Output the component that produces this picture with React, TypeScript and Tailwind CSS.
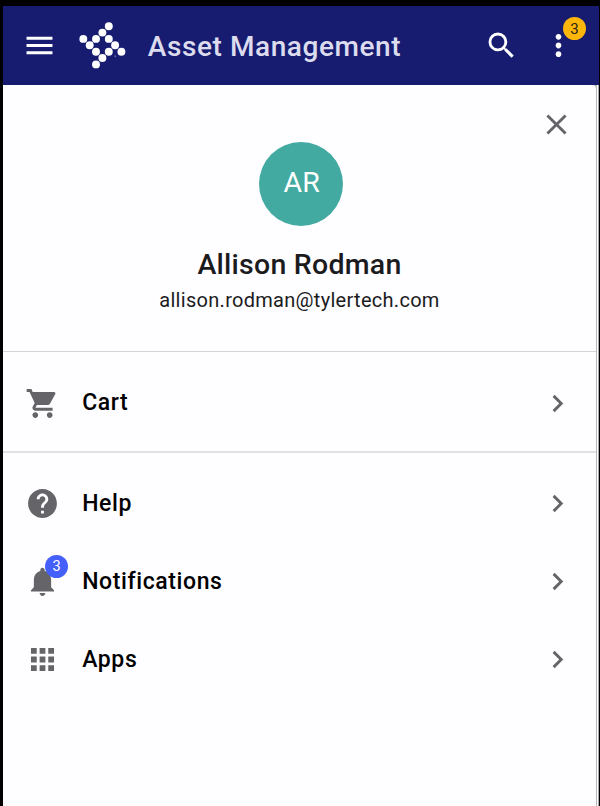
import React from "react";

type IconProps = { d: string; className?: string };

function Icon({ d, className = "" }: IconProps) {
  return (
    <svg viewBox="-0.15 -0.15 24.3 24.3" className={`h-[35px] w-[35px] shrink-0 fill-current ${className}`} aria-hidden="true">
      <path d={d} />
    </svg>
  );
}

const icons = {
  menu: "M3 18h18v-2H3v2zm0-5h18v-2H3v2zm0-7v2h18V6H3z",
  search:
    "M15.5 14h-.79l-.28-.27A6.471 6.471 0 0 0 16 9.5 6.5 6.5 0 1 0 9.5 16c1.61 0 3.09-.59 4.23-1.57l.27.28v.79l5 4.99L20.49 19l-4.99-5zm-6 0C7.01 14 5 11.99 5 9.5S7.01 5 9.5 5 14 7.01 14 9.5 11.99 14 9.5 14z",
  more: "M12 8c1.1 0 2-.9 2-2s-.9-2-2-2-2 .9-2 2 .9 2 2 2zm0 2c-1.1 0-2 .9-2 2s.9 2 2 2 2-.9 2-2-.9-2-2-2zm0 6c-1.1 0-2 .9-2 2s.9 2 2 2 2-.9 2-2-.9-2-2-2z",
  close:
    "M19 6.41L17.59 5 12 10.59 6.41 5 5 6.41 10.59 12 5 17.59 6.41 19 12 13.41 17.59 19 19 17.59 13.41 12z",
  cart: "M7 18c-1.1 0-1.99.9-1.99 2S5.9 22 7 22s2-.9 2-2-.9-2-2-2zM1 2v2h2l3.6 7.59-1.35 2.45c-.16.28-.25.61-.25.96 0 1.1.9 2 2 2h12v-2H7.42c-.14 0-.25-.11-.25-.25l.03-.12.9-1.63h7.45c.75 0 1.41-.41 1.75-1.03l3.58-6.49A1.003 1.003 0 0 0 20 4H5.21l-.94-2H1zm16 16c-1.1 0-1.99.9-1.99 2s.89 2 1.99 2 2-.9 2-2-.9-2-2-2z",
  help: "M12 2C6.48 2 2 6.48 2 12s4.48 10 10 10 10-4.48 10-10S17.52 2 12 2zm1 17h-2v-2h2v2zm2.07-7.75l-.9.92C13.45 12.9 13 13.5 13 15h-2v-.5c0-1.1.45-2.1 1.17-2.83l1.24-1.26c.37-.36.59-.86.59-1.41 0-1.1-.9-2-2-2s-2 .9-2 2H8c0-2.21 1.79-4 4-4s4 1.79 4 4c0 .88-.36 1.68-.93 2.25z",
  bell: "M12 22c1.1 0 2-.9 2-2h-4c0 1.1.89 2 2 2zm6-6v-5c0-3.07-1.64-5.64-4.5-6.32V4c0-.83-.67-1.5-1.5-1.5s-1.5.67-1.5 1.5v.68C7.63 5.36 6 7.92 6 11v5l-2 2v1h16v-1l-2-2z",
  apps: "M4 8h4V4H4v4zm6 12h4v-4h-4v4zm-6 0h4v-4H4v4zm0-6h4v-4H4v4zm6 0h4v-4h-4v4zm6-10v4h4V4h-4zm-6 4h4V4h-4v4zm6 6h4v-4h-4v4zm0 6h4v-4h-4v4z",
  chevron: "M10 6L8.59 7.41 13.17 12l-4.58 4.59L10 18l6-6z",
};

const logoDots = [
  [38.5, 6.2], [32.1, 12.6], [25.7, 18.9], [38.5, 18.9], [13, 18.9], [19.4, 25.3],
  [44.8, 25.3], [25.7, 31.7], [38.5, 31.7], [51.1, 31.7], [32.1, 38], [25.7, 44.4],
];

function Logo() {
  return (
    <svg viewBox="8 0 48 52" className="ml-[21px] h-[52px] w-[48px] shrink-0 fill-white" aria-hidden="true">
      {logoDots.map(([x, y]) => (
        <circle key={`${x}-${y}`} cx={x + 0.3} cy={y} r="3.95" />
      ))}
      <circle cx="45.3" cy="36.2" r="1" className="fill-[#5e62a5]" />
    </svg>
  );
}

function Row({ icon, label, badge }: { icon: string; label: string; badge?: string }) {
  return (
    <button className="flex h-[78px] w-full items-center pr-[21px] pl-[22px] text-left">
      <span className="relative flex text-[#656468]">
        <Icon d={icon} />
        {badge && (
          <span className="absolute -top-[9px] left-[20px] flex h-[23px] w-[23px] items-center justify-center rounded-full bg-[#455ffb] pt-px text-[14.5px] leading-none text-white">
            {badge}
          </span>
        )}
      </span>
      <span className="ml-[22.2px] flex-1 pt-[0.5px] text-[23px] leading-[32px] font-medium tracking-[0.6px] text-black">{label}</span>
      <Icon d={icons.chevron} className="text-[#656468]" />
    </button>
  );
}

export default function App() {
  return (
    <div className="h-[806px] w-[600px] overflow-hidden bg-black pt-[6px] pr-[1.5px] pl-[3px] font-['Roboto',sans-serif]">
      <header className="flex h-[79px] items-center bg-[#171c70] pr-[22.5px] pl-[19px] text-white">
        <Icon d={icons.menu} />
        <Logo />
        <h1 className="ml-[21.8px] flex-1 pt-[2px] text-[28px] leading-[40px] font-medium tracking-[0.58px] whitespace-nowrap text-[#dcdcee]">
          Asset Management
        </h1>
        <Icon d={icons.search} />
        <span className="relative ml-[22px] flex">
          <Icon d={icons.more} />
          <span className="absolute -top-[11px] left-[22px] flex h-[23px] w-[23px] items-center justify-center rounded-full bg-[#ffb60a] pt-px text-[15px] leading-none text-[#292417]">
            3
          </span>
        </span>
      </header>
      <div className="h-[721px] bg-[#a9a9ae] pr-[0.5px]">
        <div className="h-full bg-white pr-[1px]">
          <div className="h-full bg-[#b8b8bb] pr-[1px]">
            <main className="h-full rounded-tr-[4px] bg-[#fefdff]">
              <section className="flex h-[266px] flex-col items-center">
                <div className="flex h-[57px] w-full justify-end pt-[22px] pr-[22px] text-[#656468]">
                  <Icon d={icons.close} />
                </div>
                <div className="ml-[3.4px] flex h-[84px] w-[84px] items-center justify-center rounded-full bg-[#42aaa1] pb-[2px] pl-px text-[28.5px] leading-none tracking-[0.2px] text-white">
                  AR
                </div>
                <h2 className="mt-[19px] text-[28.5px] leading-[40px] font-medium tracking-[0.25px] text-[#1b1b1e]">Allison Rodman</h2>
                <p className="mt-px text-[20px] leading-[28px] tracking-[0.29px] text-[#1b1b1e]">allison.rodman@tylertech.com</p>
              </section>
              <section className="border-t border-[#d4d3d6] pt-[12px] pb-[9px]">
                <Row icon={icons.cart} label="Cart" />
              </section>
              <section className="border-t-2 border-[#e1e0e3] pt-[11.5px]">
                <Row icon={icons.help} label="Help" />
                <Row icon={icons.bell} label="Notifications" badge="3" />
                <Row icon={icons.apps} label="Apps" />
              </section>
            </main>
          </div>
        </div>
      </div>
    </div>
  );
}
